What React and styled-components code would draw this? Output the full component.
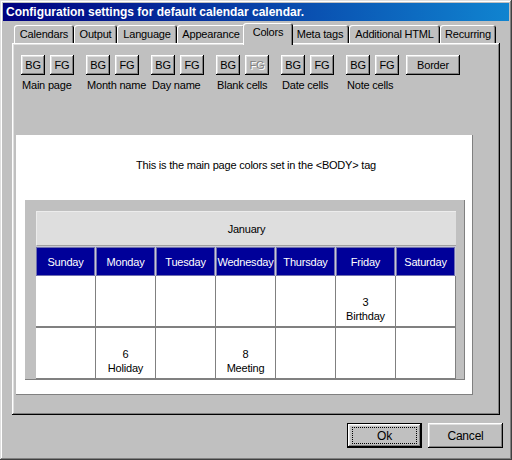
import styled, { createGlobalStyle } from "styled-components";

const GlobalStyle = createGlobalStyle`
  html, body {
    margin: 0;
    padding: 0;
    background: #c0c0c0;
  }
  * {
    box-sizing: border-box;
  }
`;

const TABS = [
  { label: "Calendars", width: 60 },
  { label: "Output", width: 43 },
  { label: "Language", width: 60 },
  { label: "Appearance", width: 68 },
  { label: "Colors", width: 46, active: true },
  { label: "Meta tags", width: 58 },
  { label: "Additional HTML", width: 91 },
  { label: "Recurring", width: 56 },
];

const GROUPS = [
  { label: "Main page" },
  { label: "Month name" },
  { label: "Day name" },
  { label: "Blank cells", fgDisabled: true },
  { label: "Date cells" },
  { label: "Note cells" },
];

const DAYS = ["Sunday", "Monday", "Tuesday", "Wednesday", "Thursday", "Friday", "Saturday"];

const WEEKS = [
  [null, null, null, null, null, ["3", "Birthday"], null],
  [null, ["6", "Holiday"], null, ["8", "Meeting"], null, null, null],
];

const raised = `
  box-shadow: inset -1px -1px #000, inset 1px 1px #fff, inset -2px -2px #808080,
    inset 2px 2px #dfdfdf;
`;

const App = () => {
  return (
    <>
      <GlobalStyle />
      <Window>
        <TitleBar>Configuration settings for default calendar calendar.</TitleBar>
        <TabStrip>
          {TABS.map((t) => (
            <Tab key={t.label} $width={t.width} $active={t.active}>
              {t.label}
            </Tab>
          ))}
        </TabStrip>
        <Panel>
          <ButtonRow>
            {GROUPS.map((g) => (
              <Group key={g.label}>
                <Pair>
                  <SmallBtn>BG</SmallBtn>
                  <SmallBtn $disabled={g.fgDisabled}>FG</SmallBtn>
                </Pair>
                <GroupLabel>{g.label}</GroupLabel>
              </Group>
            ))}
            <BorderBtn>Border</BorderBtn>
          </ButtonRow>
          <Preview>
            <PreviewText>This is the main page colors set in the &lt;BODY&gt; tag</PreviewText>
            <CalFrame>
              <MonthRow>January</MonthRow>
              <DayRow>
                {DAYS.map((d) => (
                  <DayCell key={d}>{d}</DayCell>
                ))}
              </DayRow>
              <Body>
                {WEEKS.flat().map((c, i) => (
                  <DateCell key={i}>
                    {c && (
                      <>
                        <span>{c[0]}</span>
                        <span>{c[1]}</span>
                      </>
                    )}
                  </DateCell>
                ))}
              </Body>
            </CalFrame>
          </Preview>
        </Panel>
        <Footer>
          <DialogBtn $default>
            <Focus>Ok</Focus>
          </DialogBtn>
          <DialogBtn>Cancel</DialogBtn>
        </Footer>
      </Window>
    </>
  );
};

const Window = styled.div`
  width: 512px;
  height: 460px;
  padding: 3px;
  background: #c0c0c0;
  display: flex;
  flex-direction: column;
  font-family: "Liberation Sans", Arial, sans-serif;
  font-size: 11px;
  letter-spacing: -0.2px;
  color: #000;
  box-shadow: inset -1px -1px #404040, inset 1px 1px #dfdfdf, inset -2px -2px #808080,
    inset 2px 2px #fff;
`;

const TitleBar = styled.div`
  height: 18px;
  padding-left: 3px;
  display: flex;
  align-items: center;
  background: linear-gradient(to right, #000080, #1084d0);
  color: #fff;
  font-weight: bold;
  font-size: 12px;
  letter-spacing: 0;
  white-space: nowrap;
`;

const TabStrip = styled.div`
  height: 20px;
  margin: 2px 9px 0 9px;
  padding-left: 2px;
  display: flex;
  align-items: flex-end;
  position: relative;
  z-index: 1;
`;

const Tab = styled.div`
  width: ${({ $active, $width }) => ($active ? $width + 4 : $width)}px;
  height: ${({ $active }) => ($active ? 22 : 18)}px;
  margin: 0 ${({ $active }) => ($active ? -2 : 0)}px ${({ $active }) => ($active ? -2 : 0)}px;
  padding-top: 3px;
  background: #c0c0c0;
  border-radius: 3px 3px 0 0;
  text-align: center;
  white-space: nowrap;
  position: relative;
  z-index: ${({ $active }) => ($active ? 2 : 0)};
  box-shadow: inset 1px 1px #fff, inset -1px 0 #000, inset -2px 0 #808080;
`;

const Panel = styled.div`
  height: 372px;
  margin: 0 9px;
  padding: 12px 2px 2px 2px;
  background: #c0c0c0;
  display: flex;
  flex-direction: column;
  box-shadow: inset -1px -1px #000, inset 1px 1px #fff, inset -2px -2px #808080,
    inset 2px 2px #dfdfdf;
`;

const ButtonRow = styled.div`
  display: flex;
  gap: 12px;
  padding-left: 7px;
  align-items: flex-start;
`;

const Group = styled.div`
  width: 53px;
  display: flex;
  flex-direction: column;
`;

const Pair = styled.div`
  display: flex;
  gap: 5px;
`;

const SmallBtn = styled.div`
  width: 24px;
  height: 20px;
  display: flex;
  align-items: center;
  justify-content: center;
  background: #c0c0c0;
  ${raised}
  color: ${({ $disabled }) => ($disabled ? "#808080" : "#000")};
  text-shadow: ${({ $disabled }) => ($disabled ? "1px 1px #fff" : "none")};
`;

const BorderBtn = styled(SmallBtn)`
  width: 54px;
  margin-left: -5px;
`;

const GroupLabel = styled.div`
  margin-top: 4px;
  padding-left: 1px;
  line-height: 13px;
  white-space: nowrap;
`;

const Preview = styled.div`
  width: 457px;
  height: 260px;
  margin: 43px 0 0 2px;
  background: #fff;
  border-right: 1px solid #808080;
  border-bottom: 1px solid #808080;
  display: flex;
  flex-direction: column;
`;

const PreviewText = styled.div`
  padding: 24px 0 0 24px;
  line-height: 13px;
  text-align: center;
`;

const CalFrame = styled.div`
  width: 440px;
  margin: 28px 0 0 9px;
  padding: 11px 8px 0 11px;
  background: #c0c0c0;
  border-right: 1px solid #808080;
  border-bottom: 1px solid #808080;
`;

const MonthRow = styled.div`
  width: 420px;
  height: 35px;
  display: flex;
  align-items: center;
  justify-content: center;
  background: #dedede;
  border-top: 1px solid #ececec;
  border-left: 1px solid #ececec;
  border-bottom: 1px solid #a0a0a0;
`;

const DayRow = styled.div`
  width: 420px;
  display: grid;
  grid-template-columns: repeat(7, 59px);
  column-gap: 1px;
  padding: 1px 1px 0 0;
  background: #c8c8d4;
`;

const DayCell = styled.div`
  height: 29px;
  display: flex;
  align-items: center;
  justify-content: center;
  background: #000099;
  color: #fff;
  box-shadow: inset 0 0 0 1px #7070b0;
  white-space: nowrap;
`;

const Body = styled.div`
  width: 420px;
  display: grid;
  grid-template-columns: repeat(7, 59px);
  grid-auto-rows: 50px;
  column-gap: 1px;
  row-gap: 2px;
  padding: 0 1px 1px 0;
  background: #808080;
`;

const DateCell = styled.div`
  display: flex;
  flex-direction: column;
  align-items: center;
  justify-content: flex-end;
  padding-bottom: 3px;
  background: #fff;
  line-height: 14px;
`;

const Footer = styled.div`
  display: flex;
  justify-content: flex-end;
  gap: 6px;
  margin-top: 8px;
  padding-right: 6px;
`;

const DialogBtn = styled.div`
  width: 75px;
  height: 25px;
  display: flex;
  align-items: center;
  justify-content: center;
  background: #c0c0c0;
  font-size: 12px;
  ${({ $default }) =>
    $default
      ? `box-shadow: inset 0 0 0 1px #000, inset -2px -2px #000, inset 2px 2px #fff,
        inset -3px -3px #808080, inset 3px 3px #dfdfdf;`
      : raised}
`;

const Focus = styled.div`
  width: 65px;
  height: 17px;
  display: flex;
  align-items: center;
  justify-content: center;
  border: 1px dotted #000;
`;

export default App;
